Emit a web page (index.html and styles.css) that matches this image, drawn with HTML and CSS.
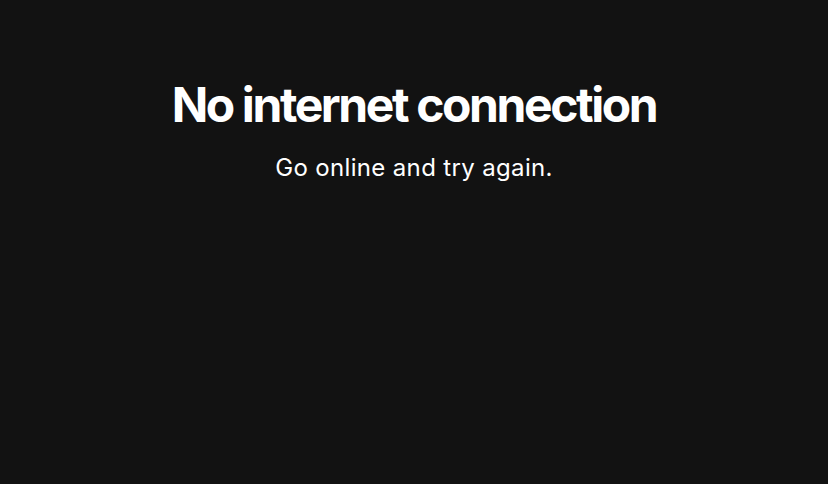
FILE: index.html
```html
<!DOCTYPE html>
<html lang="en">
<head>
<meta charset="utf-8">
<title>No internet connection</title>
<link rel="stylesheet" href="styles.css">
</head>
<body>
<main class="offline">
  <h1 class="offline-title">No internet connection</h1>
  <p class="offline-text">Go online and try again.</p>
</main>
</body>
</html>
```
FILE: styles.css
```css
html, body {
  margin: 0;
  padding: 0;
  height: 100%;
  background: #121212;
}
body {
  font-family: Inter, "Liberation Sans", sans-serif;
  color: #ffffff;
}
.offline {
  display: flex;
  flex-direction: column;
  align-items: center;
  padding-top: 76px;
}
.offline-title {
  margin: 0;
  font-size: 48px;
  font-weight: 700;
  letter-spacing: -2.4px;
  line-height: 58px;
}
.offline-text {
  margin: 19px 0 0;
  font-size: 24px;
  font-weight: 400;
  letter-spacing: 0.35px;
  line-height: 30px;
}
```
